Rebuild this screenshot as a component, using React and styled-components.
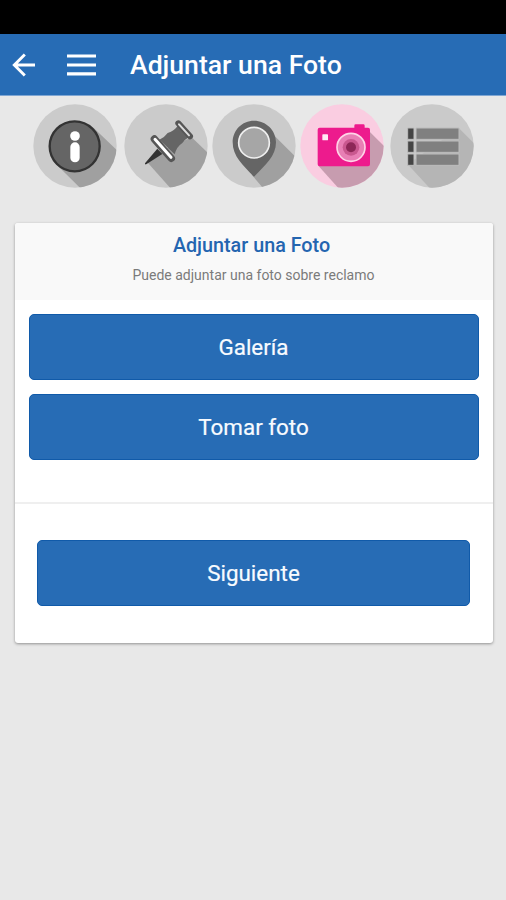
import React from "react";
import styled, { createGlobalStyle } from "styled-components";

const Global = createGlobalStyle`
  * { box-sizing: border-box; }
  body { margin: 0; background: #e8e8e8; font-family: Roboto, sans-serif; }
`;

const Screen = styled.div`
  width: 506px;
  height: 900px;
  overflow: hidden;
  background: #e8e8e8;
`;

const StatusBar = styled.div`
  height: 34px;
  background: #000;
`;

const Header = styled.header`
  display: flex;
  align-items: center;
  height: 61.5px;
  background: #276cb5;
  border-bottom: 1px solid #7fa6d3;
  color: #fff;
`;

const IconButton = styled.button`
  display: flex;
  padding: 0;
  margin: 2px 0 0 ${(p) => p.$gap}px;
  border: 0;
  background: none;
  color: inherit;
`;

const Title = styled.h1`
  margin: 1px 0 0 34.5px;
  font-size: 26.6px;
  line-height: 30px;
  font-weight: 500;
  white-space: nowrap;
`;

const Steps = styled.nav`
  display: grid;
  grid-template-columns: 90.3px 88.1px 88px 90.6px 84px;
  padding: 8px 0 0 33.3px;
  height: 127.5px;
`;

const StepIcon = styled.svg`
  display: block;
  width: 84px;
  height: 84px;
`;

const Card = styled.main`
  width: 478px;
  height: 420px;
  margin-left: 14.5px;
  background: #fff;
  border-radius: 3px;
  box-shadow: 0 1px 3px rgba(0, 0, 0, 0.38);
  overflow: hidden;
`;

const CardHeader = styled.div`
  height: 77px;
  padding-top: 11px;
  background: #f9f9f9;
  text-align: center;
`;

const CardTitle = styled.h2`
  margin: 0 4px 0 0;
  color: #2465b0;
  font-size: 19.75px;
  line-height: 24px;
  font-weight: 500;
`;

const CardText = styled.p`
  margin: 8px 0 0;
  color: #7b7b7b;
  font-size: 14px;
  line-height: 18px;
`;

const Actions = styled.section`
  display: flex;
  flex-direction: column;
  gap: 14px;
  height: 202px;
  padding: 14px 14px 0;
`;

const Footer = styled.footer`
  display: flex;
  flex-direction: column;
  border-top: 2px solid #efefef;
  padding: 36px 22.5px 0;
`;

const Button = styled.button`
  height: 66px;
  padding: 0;
  border: 1px solid #105aa9;
  border-radius: 5px;
  background: #276cb5;
  color: #f8fbff;
  font: 400 22.4px Roboto, sans-serif;
  -webkit-text-stroke: 0.2px #f8fbff;
`;

function Step({ id, x, disc = "#cbcbcb", shade, shadow, label, children }) {
  return (
    <StepIcon viewBox={`${x} 15 252 252`} role="img" aria-label={label}>
      <clipPath id={id}>
        <circle cx={x + 126} cy="141" r="125" />
      </clipPath>
      <circle cx={x + 126} cy="141" r="125" fill={disc} />
      <path d={shadow} fill={shade} clipPath={`url(#${id})`} />
      {children}
    </StepIcon>
  );
}

export default function App() {
  return (
    <Screen>
      <Global />
      <StatusBar />
      <Header>
        <IconButton $gap={11.5} aria-label="Volver">
          <svg width="24" height="24" viewBox="0 0 24 24" fill="none" stroke="currentColor" strokeWidth="2.9">
            <path d="M23 12H2.5M12.8 1.5L2.3 12l10.5 10.5" />
          </svg>
        </IconButton>
        <IconButton $gap={31} aria-label="Menú">
          <svg width="29" height="22" viewBox="0 0 29 22" fill="currentColor">
            <path d="M0 .4h29v3.2H0zM0 9.5h29v3H0zM0 18.2h29v3.2H0z" />
          </svg>
        </IconButton>
        <Title>Adjuntar una Foto</Title>
      </Header>
      <Steps>
        <Step id="info" x={25} shade="#a0a0a0" shadow="M208 88L330 204L230 330L87 188Z" label="Información">
          <circle cx="150" cy="142" r="75" fill="#656565" stroke="#333" strokeWidth="7" />
          <circle cx="151" cy="111" r="14.5" fill="#fff" />
          <rect x="137" y="130" width="28" height="60" rx="14" fill="#fff" />
        </Step>
        <Step id="pin" x={26} shade="#a0a0a0" shadow="M229 115L330 212L230 340L96 190L150 150Z" label="Marcador">
          <path d="M126 149L89 193Q88 198 94 195L141 165Z" fill="#333" />
          <path d="M132 122Q147 116 157 102Q178 95 187 80L220 115Q208 122 201 132Q184 143 178 166Z" fill="#656565" />
          <g strokeLinecap="round" fill="none">
            <path d="M117 120L168 178" stroke="#565656" strokeWidth="22" />
            <path d="M119 121L167 175" stroke="#fff" strokeWidth="9" />
            <path d="M189 73L224 112" stroke="#565656" strokeWidth="18" />
            <path d="M191 76L221 109" stroke="#ddd" strokeWidth="6" />
          </g>
        </Step>
        <Step id="place" x={20} shade="#a0a0a0" shadow="M205 108L330 232L260 370L139 227Z" label="Ubicación">
          <path d="M146 65C110 65 82 94 82 130C82 171 112 199 146 233C180 199 212 171 212 130C212 94 182 65 146 65Z" fill="#656565" />
          <circle cx="146" cy="131" r="46" fill="#a6a6a6" stroke="#f0f0f0" strokeWidth="5" />
        </Step>
        <Step id="photo" x={14} disc="#facde1" shade="#c79caf" shadow="M223 98L340 215L230 380L69 200Z" label="Foto">
          <path d="M73 86H177V80Q177 76 181 76H204Q208 76 208 80V86H218Q224 86 224 92V196Q224 202 218 202H73Q67 202 67 196V92Q67 86 73 86Z" fill="#ed1b8d" />
          <rect x="81" y="106" width="17" height="18" rx="2" fill="#ffe9f5" />
          <circle cx="167" cy="145" r="42" fill="#e87fb5" stroke="#ffd3e7" strokeWidth="5" />
          <circle cx="167" cy="145" r="25" fill="#c9588f" />
          <circle cx="167" cy="145" r="15" fill="#8d2757" />
        </Step>
        <Step id="list" x={25} disc="#cacaca" shade="#b5b5b5" shadow="M232 88L340 196L230 360L78 196Z" label="Resumen">
          <g stroke="#bdbdbd" strokeWidth="3">
            <path d="M78 87H97V121H78ZM78 126H97V160H78ZM78 165H97V199H78Z" fill="#454545" />
            <path d="M103 87H232V121H103ZM103 126H232V160H103ZM103 165H232V199H103Z" fill="#808080" />
          </g>
        </Step>
      </Steps>
      <Card>
        <CardHeader>
          <CardTitle>Adjuntar una Foto</CardTitle>
          <CardText>Puede adjuntar una foto sobre reclamo</CardText>
        </CardHeader>
        <Actions>
          <Button>Galería</Button>
          <Button>Tomar foto</Button>
        </Actions>
        <Footer>
          <Button>Siguiente</Button>
        </Footer>
      </Card>
    </Screen>
  );
}
